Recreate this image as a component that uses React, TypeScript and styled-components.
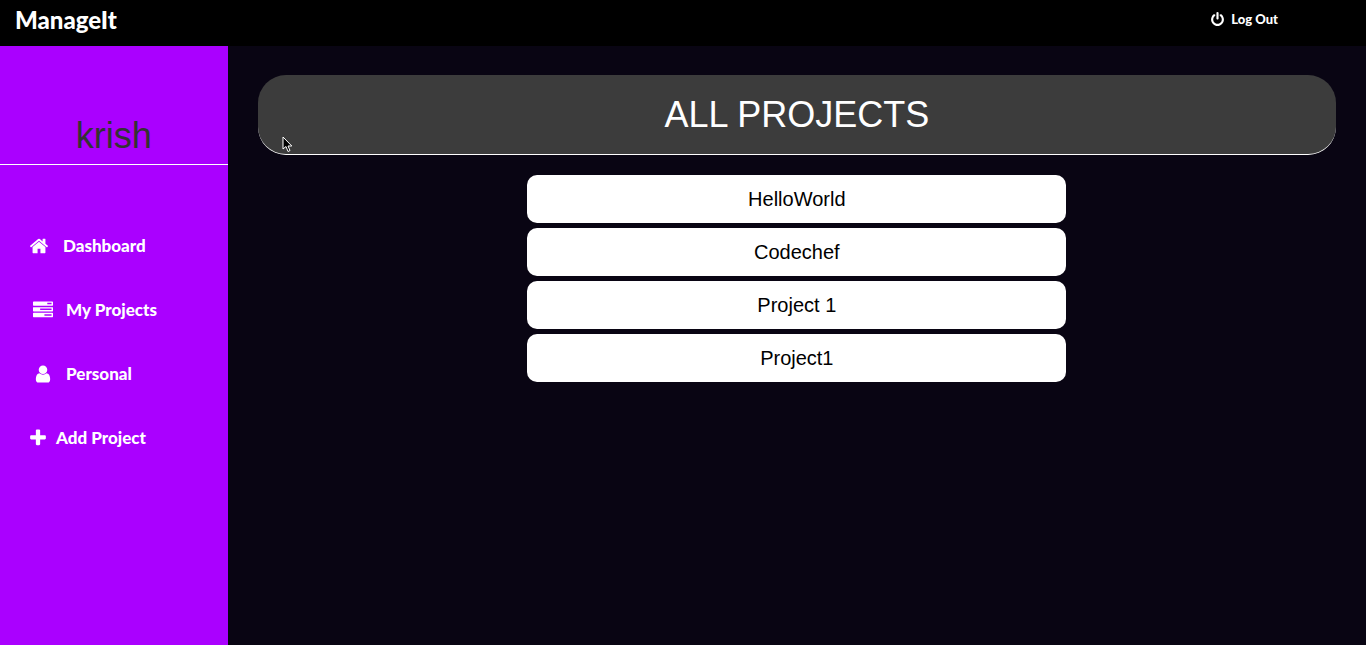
import React from "react";
import styled, { createGlobalStyle } from "styled-components";

const display = `Lato, sans-serif`;

const GlobalStyle = createGlobalStyle`
  *, *::before, *::after { box-sizing: border-box; }
  body {
    margin: 0;
    background: #090513;
    font-family: "Liberation Sans", Arial, sans-serif;
  }
`;

const Page = styled.div`
  display: flex;
  flex-direction: column;
  min-height: 100vh;
`;

const TopBar = styled.header`
  display: flex;
  justify-content: space-between;
  height: 46px;
  padding: 0 88px 0 15px;
  background: #000;
`;

const Brand = styled.a`
  color: #fff;
  font: 900 24px/40px ${display};
  text-decoration: none;
`;

const LogOut = styled.button`
  display: flex;
  align-items: center;
  gap: 6px;
  height: 38px;
  padding: 0;
  border: 0;
  background: none;
  color: #fff;
  font: 900 13px/20px ${display};
  cursor: pointer;
`;

const Body = styled.div`
  display: grid;
  grid-template-columns: minmax(0, 1fr) minmax(0, 5fr);
  flex: 1;
`;

const Sidebar = styled.aside`
  background: #aa00ff;
`;

const UserName = styled.h2`
  margin: 0;
  padding: 70px 0 8px;
  border-bottom: 1px solid #fff;
  color: #333;
  font-size: 36px;
  font-weight: normal;
  line-height: 40px;
  text-align: center;
`;

const Nav = styled.nav`
  display: flex;
  flex-direction: column;
  gap: 40px;
  padding: 69px 0 40px 30px;
`;

const NavLink = styled.a<{ $gap: number }>`
  display: flex;
  align-items: center;
  gap: ${(p) => p.$gap}px;
  color: #fff;
  font: 900 17px/24px ${display};
  text-decoration: none;
  white-space: nowrap;
`;

const IconSlot = styled.span<{ $width: number }>`
  display: flex;
  flex: none;
  justify-content: center;
  width: ${(p) => p.$width}px;
`;

const Glyph = styled.svg<{ $size: number }>`
  flex: none;
  width: ${(p) => p.$size}px;
  height: ${(p) => p.$size}px;
  fill: currentColor;
`;

const Content = styled.main`
  padding: 29px 30px;
`;

const Banner = styled.div`
  position: relative;
  padding: 20px 0 19px;
  border-bottom: 1px solid #fff;
  border-radius: 28px;
  background: #3c3c3c;
`;

const Title = styled.h1`
  margin: 0;
  color: #fff;
  font-size: 36px;
  font-weight: normal;
  line-height: 40px;
  text-align: center;
`;

const Pointer = styled.svg`
  position: absolute;
  left: 24px;
  top: 61px;
  width: 11px;
  height: 17px;
`;

const ProjectList = styled.div`
  display: flex;
  flex-direction: column;
  gap: 5px;
  width: 50%;
  margin: 20px auto 0;
`;

const ProjectButton = styled.button`
  height: 48px;
  padding: 0;
  border: 0;
  border-radius: 10px;
  background: #fff;
  color: #000;
  font: 20px/24px "Liberation Sans", Arial, sans-serif;
  cursor: pointer;
`;

const paths = {
  home: "M1472 992v480q0 26-19 45t-45 19h-384v-384h-256v384h-384q-26 0-45-19t-19-45v-480q0-1 .5-3t.5-3l575-474 575 474q1 2 1 6zm223-69l-62 74q-8 9-21 11h-3q-13 0-21-7l-692-577-692 577q-12 8-24 7-13-2-21-11l-62-74q-8-10-7-23.5t11-21.5l719-599q32-26 76-26t76 26l244 204v-195q0-14 9-23t23-9h192q14 0 23 9t9 23v408l219 182q10 8 11 21.5t-7 23.5z",
  tasks:
    "M1024 1408h640v-128h-640v128zm-384-512h1024v-128h-1024v128zm640-512h384v-128h-384v128zm512 832v256q0 26-19 45t-45 19h-1664q-26 0-45-19t-19-45v-256q0-26 19-45t45-19h1664q26 0 45 19t19 45zm0-512v256q0 26-19 45t-45 19h-1664q-26 0-45-19t-19-45v-256q0-26 19-45t45-19h1664q26 0 45 19t19 45zm0-512v256q0 26-19 45t-45 19h-1664q-26 0-45-19t-19-45v-256q0-26 19-45t45-19h1664q26 0 45 19t19 45z",
  user: "M1536 1399q0 109-62.5 187t-150.5 78h-854q-88 0-150.5-78t-62.5-187q0-85 8.5-160.5t31.5-152 58.5-131 94-89 134.5-34.5q131 128 313 128t313-128q76 0 134.5 34.5t94 89 58.5 131 31.5 152 8.5 160.5zm-256-887q0 159-112.5 271.5t-271.5 112.5-271.5-112.5-112.5-271.5 112.5-271.5 271.5-112.5 271.5 112.5 112.5 271.5z",
  plus: "M1600 736v192q0 40-28 68t-68 28h-416v416q0 40-28 68t-68 28h-192q-40 0-68-28t-28-68v-416h-416q-40 0-68-28t-28-68v-192q0-40 28-68t68-28h416v-416q0-40 28-68t68-28h192q40 0 68 28t28 68v416h416q40 0 68 28t28 68z",
  power:
    "M1664 896q0 156-61 298t-164 245-245 164-298 61-298-61-245-164-164-245-61-298q0-182 80.5-343t226.5-270q43-32 95.5-25t83.5 50q32 42 24.5 94.5t-49.5 84.5q-98 74-151.5 181t-53.5 228q0 104 40.5 198.5t109.5 163.5 163.5 109.5 198.5 40.5 198.5-40.5 163.5-109.5 109.5-163.5 40.5-198.5q0-121-53.5-228t-151.5-181q-42-32-49.5-84.5t24.5-94.5q31-43 84-50t95 25q146 109 226.5 270t80.5 343zm-640-768v640q0 52-38 90t-90 38-90-38-38-90v-640q0-52 38-90t90-38 90 38 38 90z",
};

function Icon({ name, size }: { name: keyof typeof paths; size: number }) {
  return (
    <Glyph $size={size} viewBox="0 0 1792 1792" aria-hidden="true">
      <path d={paths[name]} />
    </Glyph>
  );
}

const links: { label: string; icon: keyof typeof paths; slot: number; gap: number }[] = [
  { label: "Dashboard", icon: "home", slot: 18, gap: 15 },
  { label: "My Projects", icon: "tasks", slot: 26, gap: 10 },
  { label: "Personal", icon: "user", slot: 26, gap: 10 },
  { label: "Add Project", icon: "plus", slot: 16, gap: 10 },
];

const projects = ["HelloWorld", "Codechef", "Project 1", "Project1"];

export default function App() {
  return (
    <Page>
      <GlobalStyle />
      <TopBar>
        <Brand href="#">ManageIt</Brand>
        <LogOut type="button">
          <Icon name="power" size={15} />
          Log Out
        </LogOut>
      </TopBar>
      <Body>
        <Sidebar>
          <UserName>krish</UserName>
          <Nav>
            {links.map((link) => (
              <NavLink key={link.label} href="#" $gap={link.gap}>
                <IconSlot $width={link.slot}>
                  <Icon name={link.icon} size={20} />
                </IconSlot>
                {link.label}
              </NavLink>
            ))}
          </Nav>
        </Sidebar>
        <Content>
          <Banner>
            <Title>ALL PROJECTS</Title>
            <Pointer viewBox="0 0 11 17" aria-hidden="true">
              <path
                d="M1 1V13L4 10.500L6 15.500L8 14.500L6 10H9.800Z"
                fill="#000"
                stroke="#fff"
              />
            </Pointer>
          </Banner>
          <ProjectList>
            {projects.map((project) => (
              <ProjectButton key={project} type="button">
                {project}
              </ProjectButton>
            ))}
          </ProjectList>
        </Content>
      </Body>
    </Page>
  );
}
